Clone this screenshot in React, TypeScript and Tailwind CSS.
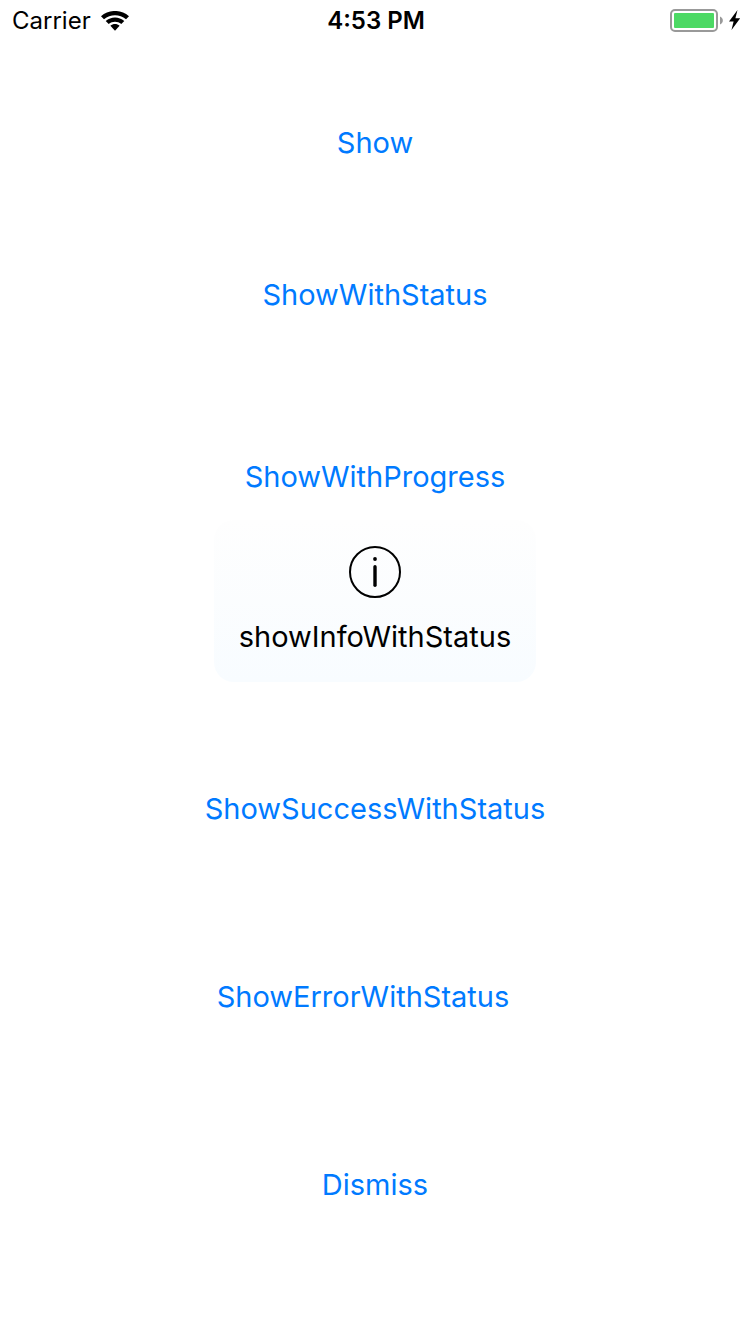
import { useState } from 'react';

interface Action {
  label: string;
  spacing: string;
}

const actions: Action[] = [
  { label: 'Show', spacing: 'mt-20' },
  { label: 'ShowWithStatus', spacing: 'mt-28' },
  { label: 'ShowWithProgress', spacing: 'mt-[142px]' },
  { label: 'ShowSuccessWithStatus', spacing: 'mt-[292px]' },
  { label: 'ShowErrorWithStatus', spacing: 'mt-[148px] pr-6' },
  { label: 'Dismiss', spacing: 'mt-[148px]' },
];

function WifiIcon() {
  return (
    <svg width="28" height="20" viewBox="0 0 28 20" aria-hidden="true">
      <path d="M0 5.2C8 -1.8 20 -1.8 28 5.2L25 8.3C18.6 2.9 9.4 2.9 3 8.3z" />
      <path d="M4.7 10C10 5.2 18 5.2 23.3 10L20.3 13.1C16.6 10 11.4 10 7.7 13.1z" />
      <path d="M9.4 14.8C12 12.5 16 12.5 18.6 14.8L14 19.8z" />
    </svg>
  );
}

function BatteryIcon() {
  return (
    <svg width="70" height="24" viewBox="0 0 70 24" aria-hidden="true">
      <rect x="1" y="1" width="46" height="21" rx="4" fill="none" stroke="#999999" strokeWidth="2" />
      <rect x="4" y="4" width="40" height="15" rx="1" fill="#4cd964" />
      <path d="M50 7.5c3.8 1.5 3.8 6.5 0 8z" fill="#999999" />
      <path d="M67.5 1L59 12.5h4.6L61.5 21 70.2 9.3h-4.8z" />
    </svg>
  );
}

function StatusBar() {
  return (
    <header className="grid h-[42px] grid-cols-[1fr_auto_1fr] items-center pl-3 pr-[10px] text-2xl text-black">
      <div className="flex items-center gap-[10px]">
        <span>Carrier</span>
        <WifiIcon />
      </div>
      <time className="font-semibold">4:53 PM</time>
      <div className="flex justify-end">
        <BatteryIcon />
      </div>
    </header>
  );
}

function InfoHud({ message }: { message: string }) {
  return (
    <div
      role="status"
      className="absolute left-1/2 top-[520px] flex min-w-[322px] -translate-x-1/2 flex-col items-center rounded-[20px] bg-linear-to-b from-[#fefefe] to-[#f8fcff] px-6 pb-6 pt-[26px] text-black"
    >
      <svg width="52" height="52" viewBox="0 0 52 52" fill="none" stroke="currentColor" strokeWidth="2" aria-hidden="true">
        <circle cx="26" cy="26" r="25" />
        <path d="M26 20.7v18.6" strokeWidth="3.4" strokeLinecap="round" />
        <circle cx="26" cy="13" r="1.9" fill="currentColor" stroke="none" />
      </svg>
      <p className="mt-[18px] text-[29px] leading-[42px]">{message}</p>
    </div>
  );
}

export default function App() {
  const [message, setMessage] = useState('showInfoWithStatus');

  return (
    <div className="relative min-h-screen bg-white font-['Inter',sans-serif]">
      <StatusBar />
      <main className="flex flex-col items-center pt-px">
        {actions.map(({ label, spacing }) => (
          <button
            key={label}
            type="button"
            onClick={() => setMessage(label === 'Dismiss' ? '' : label)}
            className={`text-[29px] leading-10 text-[#007aff] ${spacing}`}
          >
            {label}
          </button>
        ))}
      </main>
      {message && <InfoHud message={message} />}
    </div>
  );
}
